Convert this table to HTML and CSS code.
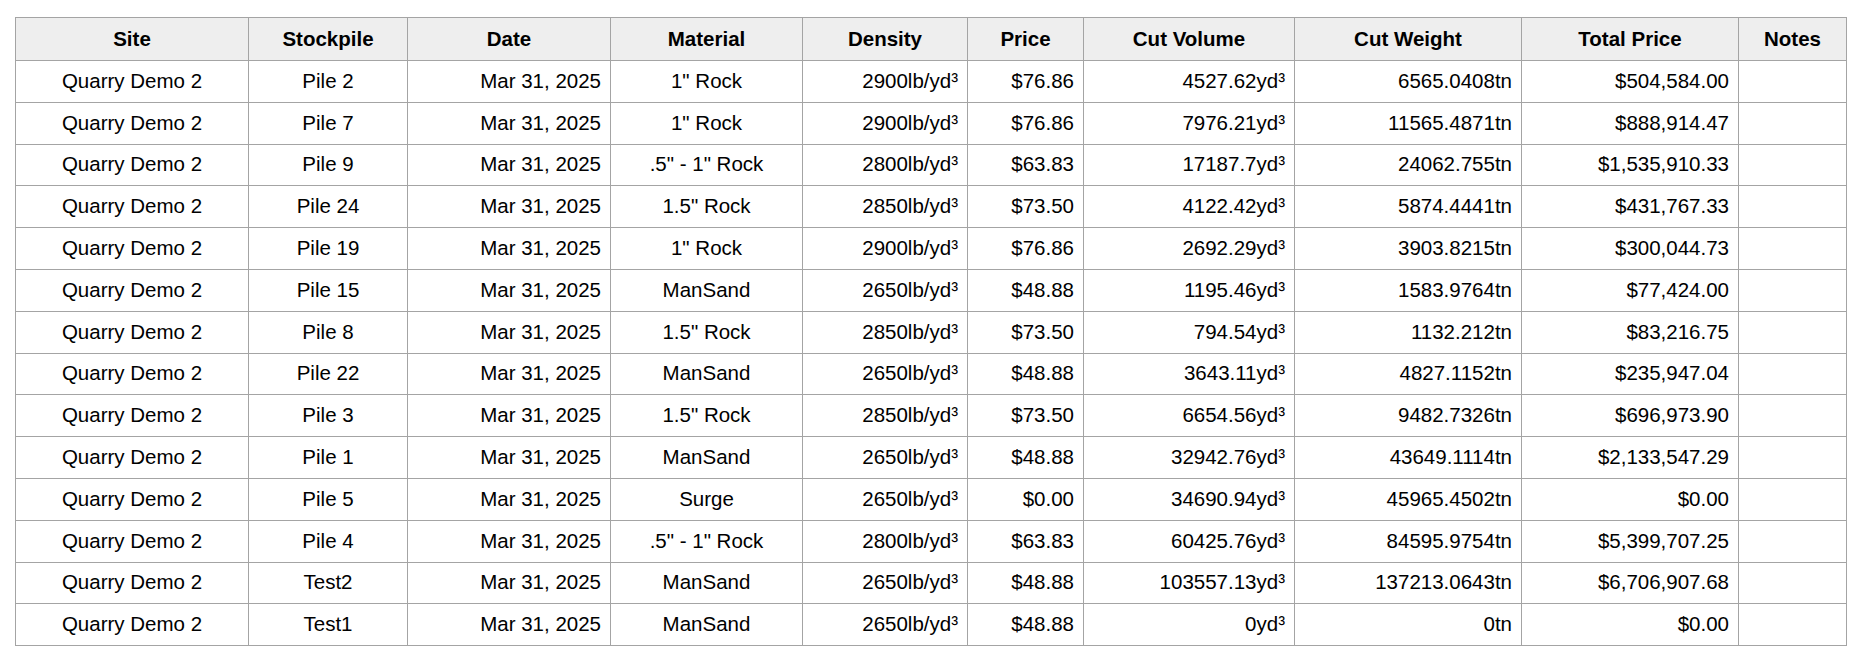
FILE: index.html
```
<!DOCTYPE html>
<html lang="en">
<head>
<meta charset="utf-8">
<title>Stockpile Report</title>
<link rel="stylesheet" href="styles.css">
</head>
<body>
<div class="wrap">
<table class="report">
<colgroup>
<col class="c-site"><col class="c-pile"><col class="c-date"><col class="c-mat"><col class="c-dens"><col class="c-price"><col class="c-vol"><col class="c-wt"><col class="c-total"><col class="c-notes">
</colgroup>
<thead>
<tr><th>Site</th><th>Stockpile</th><th>Date</th><th>Material</th><th>Density</th><th>Price</th><th>Cut Volume</th><th>Cut Weight</th><th>Total Price</th><th>Notes</th></tr>
</thead>
<tbody>
<tr><td class="ctr">Quarry Demo 2</td><td class="ctr">Pile 2</td><td class="num">Mar 31, 2025</td><td class="ctr">1" Rock</td><td class="num">2900lb/yd³</td><td class="num">$76.86</td><td class="num">4527.62yd³</td><td class="num">6565.0408tn</td><td class="num">$504,584.00</td><td></td></tr>
<tr><td class="ctr">Quarry Demo 2</td><td class="ctr">Pile 7</td><td class="num">Mar 31, 2025</td><td class="ctr">1" Rock</td><td class="num">2900lb/yd³</td><td class="num">$76.86</td><td class="num">7976.21yd³</td><td class="num">11565.4871tn</td><td class="num">$888,914.47</td><td></td></tr>
<tr><td class="ctr">Quarry Demo 2</td><td class="ctr">Pile 9</td><td class="num">Mar 31, 2025</td><td class="ctr">.5" - 1" Rock</td><td class="num">2800lb/yd³</td><td class="num">$63.83</td><td class="num">17187.7yd³</td><td class="num">24062.755tn</td><td class="num">$1,535,910.33</td><td></td></tr>
<tr><td class="ctr">Quarry Demo 2</td><td class="ctr">Pile 24</td><td class="num">Mar 31, 2025</td><td class="ctr">1.5" Rock</td><td class="num">2850lb/yd³</td><td class="num">$73.50</td><td class="num">4122.42yd³</td><td class="num">5874.4441tn</td><td class="num">$431,767.33</td><td></td></tr>
<tr><td class="ctr">Quarry Demo 2</td><td class="ctr">Pile 19</td><td class="num">Mar 31, 2025</td><td class="ctr">1" Rock</td><td class="num">2900lb/yd³</td><td class="num">$76.86</td><td class="num">2692.29yd³</td><td class="num">3903.8215tn</td><td class="num">$300,044.73</td><td></td></tr>
<tr><td class="ctr">Quarry Demo 2</td><td class="ctr">Pile 15</td><td class="num">Mar 31, 2025</td><td class="ctr">ManSand</td><td class="num">2650lb/yd³</td><td class="num">$48.88</td><td class="num">1195.46yd³</td><td class="num">1583.9764tn</td><td class="num">$77,424.00</td><td></td></tr>
<tr><td class="ctr">Quarry Demo 2</td><td class="ctr">Pile 8</td><td class="num">Mar 31, 2025</td><td class="ctr">1.5" Rock</td><td class="num">2850lb/yd³</td><td class="num">$73.50</td><td class="num">794.54yd³</td><td class="num">1132.212tn</td><td class="num">$83,216.75</td><td></td></tr>
<tr><td class="ctr">Quarry Demo 2</td><td class="ctr">Pile 22</td><td class="num">Mar 31, 2025</td><td class="ctr">ManSand</td><td class="num">2650lb/yd³</td><td class="num">$48.88</td><td class="num">3643.11yd³</td><td class="num">4827.1152tn</td><td class="num">$235,947.04</td><td></td></tr>
<tr><td class="ctr">Quarry Demo 2</td><td class="ctr">Pile 3</td><td class="num">Mar 31, 2025</td><td class="ctr">1.5" Rock</td><td class="num">2850lb/yd³</td><td class="num">$73.50</td><td class="num">6654.56yd³</td><td class="num">9482.7326tn</td><td class="num">$696,973.90</td><td></td></tr>
<tr><td class="ctr">Quarry Demo 2</td><td class="ctr">Pile 1</td><td class="num">Mar 31, 2025</td><td class="ctr">ManSand</td><td class="num">2650lb/yd³</td><td class="num">$48.88</td><td class="num">32942.76yd³</td><td class="num">43649.1114tn</td><td class="num">$2,133,547.29</td><td></td></tr>
<tr><td class="ctr">Quarry Demo 2</td><td class="ctr">Pile 5</td><td class="num">Mar 31, 2025</td><td class="ctr">Surge</td><td class="num">2650lb/yd³</td><td class="num">$0.00</td><td class="num">34690.94yd³</td><td class="num">45965.4502tn</td><td class="num">$0.00</td><td></td></tr>
<tr><td class="ctr">Quarry Demo 2</td><td class="ctr">Pile 4</td><td class="num">Mar 31, 2025</td><td class="ctr">.5" - 1" Rock</td><td class="num">2800lb/yd³</td><td class="num">$63.83</td><td class="num">60425.76yd³</td><td class="num">84595.9754tn</td><td class="num">$5,399,707.25</td><td></td></tr>
<tr><td class="ctr">Quarry Demo 2</td><td class="ctr">Test2</td><td class="num">Mar 31, 2025</td><td class="ctr">ManSand</td><td class="num">2650lb/yd³</td><td class="num">$48.88</td><td class="num">103557.13yd³</td><td class="num">137213.0643tn</td><td class="num">$6,706,907.68</td><td></td></tr>
<tr><td class="ctr">Quarry Demo 2</td><td class="ctr">Test1</td><td class="num">Mar 31, 2025</td><td class="ctr">ManSand</td><td class="num">2650lb/yd³</td><td class="num">$48.88</td><td class="num">0yd³</td><td class="num">0tn</td><td class="num">$0.00</td><td></td></tr>
</tbody>
</table>
</div>
</body>
</html>
```
FILE: styles.css
```
html, body {
  margin: 0;
  padding: 0;
  background: #ffffff;
}
.wrap {
  padding: 17px 15px 0 15px;
}
.report {
  border-collapse: collapse;
  table-layout: fixed;
  width: 1831px;
  font-family: "Liberation Sans", Arial, Helvetica, sans-serif;
  font-size: 20.5px;
  color: #000;
}
.c-site { width: 233px; }
.c-pile { width: 159px; }
.c-date { width: 203px; }
.c-mat { width: 192px; }
.c-dens { width: 165px; }
.c-price { width: 116px; }
.c-vol { width: 211px; }
.c-wt { width: 227px; }
.c-total { width: 217px; }
.c-notes { width: 108px; }
.report th,
.report td {
  border: 1px solid #a4a4a4;
  padding: 0 9px 2px 9px;
  line-height: 23px;
  white-space: nowrap;
}
.report thead tr {
  height: 43px;
}
.report tbody tr {
  height: 41.8px;
}
.report th {
  background: #eeeeee;
  font-weight: bold;
  text-align: center;
}
.report td.ctr {
  text-align: center;
}
.report td.num {
  text-align: right;
}
```
